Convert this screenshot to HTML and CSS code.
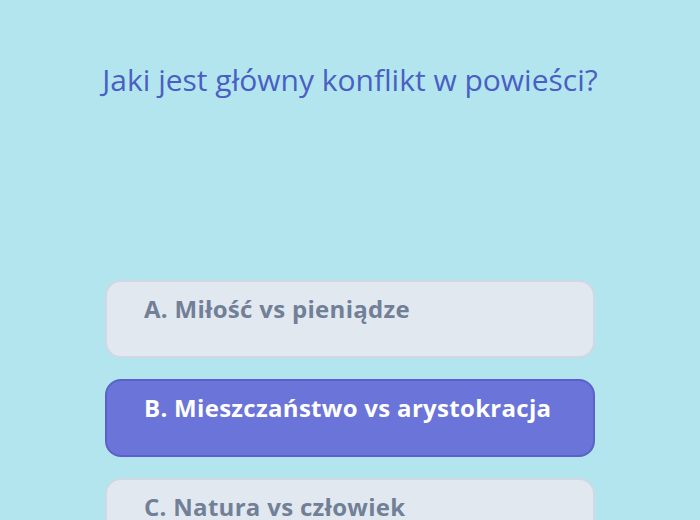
FILE: index.html
```html
<!DOCTYPE html>
<html lang="pl">
<head>
	<meta charset="UTF-8">
	<title>Quiz</title>
	<link rel="stylesheet" href="styles.css">
</head>
<body>
	<div class="quiz">
		<h1 class="question">Jaki jest główny konflikt w powieści?</h1>
		<ul class="answers">
			<li class="answer">A. Miłość vs pieniądze</li>
			<li class="answer selected">B. Mieszczaństwo vs arystokracja</li>
			<li class="answer">C. Natura vs człowiek</li>
		</ul>
	</div>
</body>
</html>
```

FILE: styles.css
```css
* {
	padding: 0;
	margin: 0;
	box-sizing: border-box;
}

ul {
	list-style: none;
}

body {
	background-color: #b3e5ef;
	font-family: "Open Sans", "Noto Sans", sans-serif;
	height: 520px;
	overflow: hidden;
}

.quiz {
	display: flex;
	flex-direction: column;
	align-items: center;
	padding-top: 56px;
}

.question {
	font-size: 30px;
	font-weight: 400;
	line-height: 48px;
	color: #4a5fc4;
	text-align: center;
}

.answers {
	margin-top: 176px;
	width: 490px;
	display: flex;
	flex-direction: column;
	gap: 21px;
}

.answer {
	height: 78px;
	padding: 11px 37px 0;
	border: 2px solid #cfd8e3;
	border-radius: 16px;
	background-color: #e2e8f0;
	color: #718096;
	font-size: 24px;
	font-weight: 700;
	line-height: 32px;
	letter-spacing: 0.3px;
}

.answer.selected {
	background-color: #6b74d8;
	border-color: #5a62c9;
	color: #fff;
}
```
